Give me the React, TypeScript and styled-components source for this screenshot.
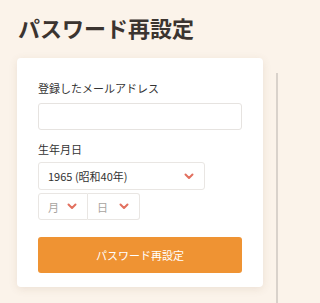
import React from 'react';
import styled, { createGlobalStyle } from 'styled-components';

const GlobalStyle = createGlobalStyle`
  html, body {
    margin: 0;
    padding: 0;
    background: #fbf3ea;
    font-family: "Noto Sans CJK JP", "Noto Sans", sans-serif;
    color: #333;
  }
`;

const Page = styled.div`
  display: flex;
  width: 280px;
  min-height: 303px;
  background: #fbf3ea;
`;

const Main = styled.main`
  display: flex;
  flex-direction: column;
  width: 263px;
`;

const Rail = styled.div`
  width: 2px;
  margin-top: 73px;
  margin-left: 13px;
  background: #d9d2cb;
`;

const Title = styled.h1`
  margin: 11px 0 0 18px;
  font-size: 22px;
  line-height: 32px;
  font-weight: 700;
  color: #3b3430;
`;

const Card = styled.section`
  display: flex;
  flex-direction: column;
  margin: 15px 0 0 17px;
  padding: 22px 21px 14px;
  background: #fff;
  border-radius: 4px;
  box-shadow: 0 2px 8px rgba(120, 90, 60, 0.12);
`;

const Label = styled.label<{ $gap: number }>`
  font-size: 11px;
  line-height: 16px;
  color: #333;
  margin-bottom: ${(p) => p.$gap}px;
`;

const TextInput = styled.input`
  box-sizing: border-box;
  width: 204px;
  height: 27px;
  margin: 0 0 11px;
  border: 1px solid #e6e3e0;
  border-radius: 3px;
  background: #fff;
  outline: none;
`;

const SelectRow = styled.div`
  display: flex;
  margin-bottom: 3px;
`;

const SelectBox = styled.div<{ $width: number; $height: number; $joined?: 'left' | 'right' }>`
  box-sizing: border-box;
  display: flex;
  align-items: center;
  justify-content: space-between;
  width: ${(p) => p.$width}px;
  height: ${(p) => p.$height}px;
  padding: 0 10px 0 9px;
  border: 1px solid #e9e6e3;
  border-radius: ${(p) =>
    p.$joined === 'left' ? '3px 0 0 3px' : p.$joined === 'right' ? '0 3px 3px 0' : '3px'};
  ${(p) => (p.$joined === 'right' ? 'border-left: none;' : '')}
  background: #fff;
`;

const SelectText = styled.span<{ $muted?: boolean }>`
  font-size: 11px;
  color: ${(p) => (p.$muted ? '#a8a4a0' : '#333')};
`;

const Button = styled.button`
  margin-top: 14px;
  width: 204px;
  height: 36px;
  border: none;
  border-radius: 3px;
  background: #ef9333;
  color: #fff;
  font-family: inherit;
  font-size: 11px;
  font-weight: 400;
`;

const Chevron = () => (
  <svg width="10" height="7" viewBox="0 0 10 7">
    <path
      d="M1.5 1.5 L5 5 L8.5 1.5"
      fill="none"
      stroke="#e2705f"
      strokeWidth="2"
      strokeLinecap="round"
      strokeLinejoin="round"
    />
  </svg>
);

export default function App() {
  return (
    <Page>
      <GlobalStyle />
      <Main>
        <Title>パスワード再設定</Title>
        <Card>
          <Label $gap={7}>登録したメールアドレス</Label>
          <TextInput type="email" />
          <Label $gap={5}>生年月日</Label>
          <SelectRow>
            <SelectBox $width={167} $height={28}>
              <SelectText>1965 (昭和40年)</SelectText>
              <Chevron />
            </SelectBox>
          </SelectRow>
          <SelectRow>
            <SelectBox $width={50} $height={27} $joined="left">
              <SelectText $muted>月</SelectText>
              <Chevron />
            </SelectBox>
            <SelectBox $width={52} $height={27} $joined="right">
              <SelectText $muted>日</SelectText>
              <Chevron />
            </SelectBox>
          </SelectRow>
          <Button>パスワード再設定</Button>
        </Card>
      </Main>
      <Rail />
    </Page>
  );
}
